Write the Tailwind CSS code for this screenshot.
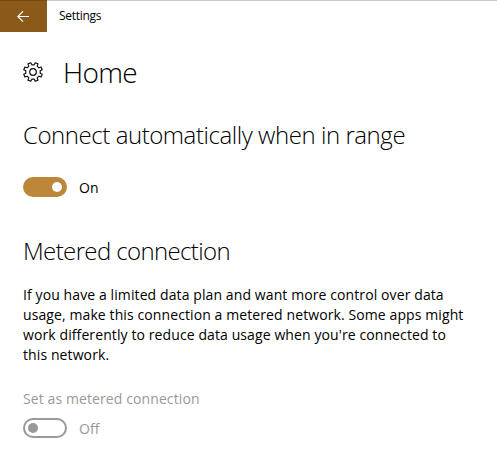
<!DOCTYPE html>
<html lang="en"><head><meta charset="utf-8"><title>Settings</title>
<script src="https://cdn.jsdelivr.net/npm/@tailwindcss/browser@4"></script></head>
<body class="h-[465px] w-[497px] overflow-hidden bg-white font-['Open_Sans','Noto_Sans',sans-serif] text-black">
<header class="flex h-8 border-t border-[#c8c8c8]">
<button class="-mt-px flex h-8 w-[47px] items-center justify-center border-t border-[#704914] bg-[#8b5a1b] pr-px" aria-label="Back">
<svg class="h-3 w-3" viewBox="0 0 12 12" fill="none" stroke="white" stroke-width="1.1"><path d="M12 5.5H.8M6 .3L.8 5.5L6 10.7"/></svg>
</button>
<span class="pl-3 text-[12px] leading-[30px] tracking-[-0.3px]">Settings</span>
</header>
<main class="pl-[23px]">
<div class="flex h-20 items-center">
<svg class="h-5 w-5" viewBox="-10 -10 20 20" fill="none" stroke="#111" stroke-width="1.2" stroke-linejoin="round"><path d="M1.2-7.2L2.2-9.2L5-8.1L4.2-5.9L5.9-4.2L8.1-5L9.2-2.2L7.2-1.2V1.2L9.2 2.2L8.1 5L5.9 4.2L4.2 5.9L5 8.1L2.2 9.2L1.2 7.2H-1.2L-2.2 9.2L-5 8.1L-4.2 5.9L-5.9 4.2L-8.1 5L-9.2 2.2L-7.2 1.2V-1.2L-9.2-2.2L-8.1-5L-5.9-4.2L-4.2-5.9L-5-8.1L-2.2-9.2L-1.2-7.2Z"/><circle r="3.3"/></svg>
<h1 class="pl-5 text-[28px] font-light leading-8 tracking-[-0.7px]">Home</h1>
</div>
<h2 class="mt-1 whitespace-nowrap text-[24px] font-light leading-[38px] tracking-[-0.44px]">Connect automatically when in range</h2>
<div class="mt-[23px] flex h-5 items-center">
<div class="flex h-5 w-11 items-center justify-end rounded-full bg-[#bd873a] pr-[5px]"><div class="size-[10px] rounded-full bg-white"></div></div>
<span class="pl-3 text-[14px]">On</span></div>
<h2 class="mt-[35px] whitespace-nowrap text-[24px] font-light leading-[38px] tracking-[-0.62px]">Metered connection</h2>
<p class="mt-[15px] whitespace-nowrap text-[14px] leading-5 tracking-[0.1px]">If you have a limited data plan and want more control over data<br>usage, make this connection a metered network. Some apps might<br>work differently to reduce data usage when you're connected to<br>this network.</p>
<div class="mt-6 text-[14px] leading-5 tracking-[0.1px] text-[#999]">Set as metered connection</div>
<div class="mt-[9px] flex h-5 items-center text-[#999]">
<div class="flex h-5 w-11 items-center rounded-full border-2 border-[#999] pl-[3px]"><div class="size-[10px] rounded-full bg-[#999]"></div></div>
<span class="pl-3 text-[14px]">Off</span></div>
</main></body></html>
